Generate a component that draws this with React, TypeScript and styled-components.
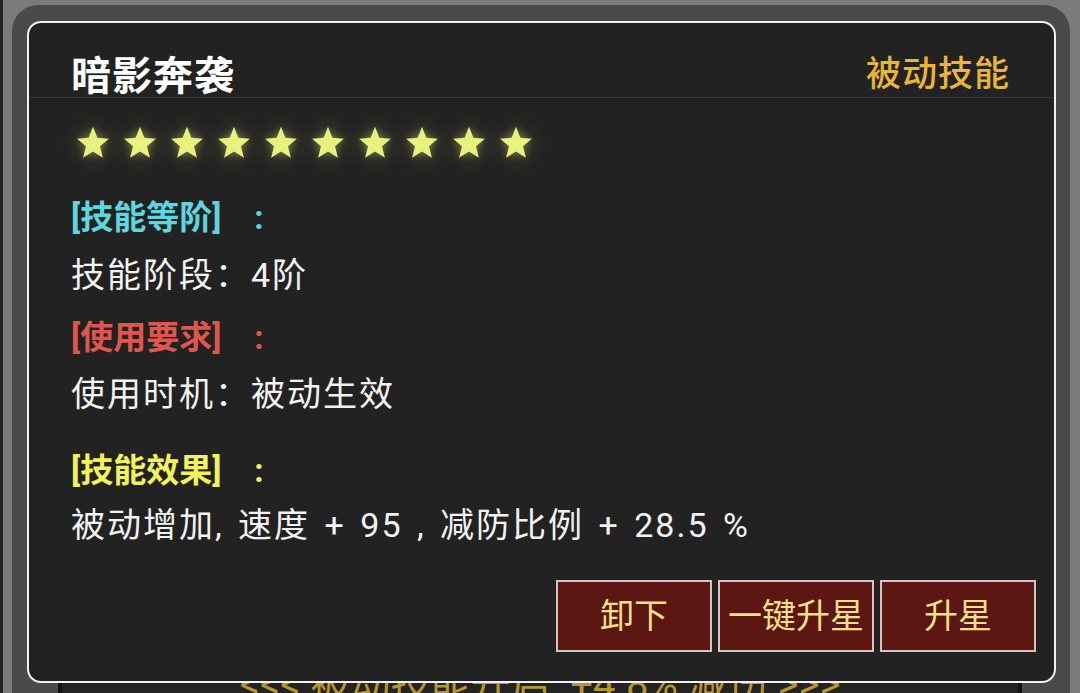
import React from 'react';
import styled, { createGlobalStyle } from 'styled-components';

const GlobalStyle = createGlobalStyle`
  html, body {
    margin: 0;
    padding: 0;
    background: #7b7b7b;
    overflow: hidden;
  }
  * {
    box-sizing: border-box;
  }
`;

const FONT = `"Roboto", "Noto Sans CJK SC", sans-serif`;

const Stage = styled.div`
  position: relative;
  height: 693px;
  width: 1080px;
  border-left: 3px solid #242424;
  padding: 5px 10px 0 9px;
  font-family: ${FONT};
`;

const Panel = styled.div`
  height: 100%;
  background: #4a4a4a;
  border-radius: 26px 26px 0 0;
  padding: 0 48px 0 46px;
  display: flex;
  flex-direction: column;
  justify-content: flex-end;
`;

const BuffBar = styled.div`
  height: 40px;
  background: #232323;
  border-left: 4px solid #111;
  border-right: 4px solid #111;
  display: flex;
  justify-content: center;
  padding-top: 10px;
  color: #b8952f;
  font-size: 40px;
  line-height: 44px;
  white-space: nowrap;
  overflow: hidden;
`;

const Modal = styled.div`
  position: absolute;
  left: 24px;
  top: 21px;
  width: 1029px;
  height: 662px;
  background: #222222;
  border: 2px solid #f2f2f2;
  border-radius: 14px;
  display: flex;
  flex-direction: column;
  overflow: hidden;
`;

const Header = styled.div`
  display: flex;
  justify-content: space-between;
  align-items: flex-end;
  height: 75px;
  padding: 0 44px 0 42px;
  border-bottom: 1px solid #383838;
`;

const Title = styled.div`
  color: #ffffff;
  font-size: 40px;
  font-weight: 700;
  line-height: 40px;
  letter-spacing: 1px;
`;

const Kind = styled.div`
  color: #e8b43a;
  font-size: 35px;
  font-weight: 500;
  line-height: 40px;
  letter-spacing: 1px;
  padding-bottom: 2px;
`;

const Body = styled.div`
  padding: 0 42px;
  display: flex;
  flex-direction: column;
`;

const Stars = styled.div`
  display: flex;
  gap: 11px;
  margin-top: 27px;
  margin-left: 4px;
`;

const Star = styled.svg`
  width: 36px;
  height: 36px;
  filter: drop-shadow(0 0 4px rgba(230, 240, 120, 0.45))
    drop-shadow(0 0 12px rgba(210, 220, 110, 0.25));
`;

const Section = styled.div<{ $top: number }>`
  margin-top: ${p => p.$top}px;
  display: flex;
  flex-direction: column;
`;

const Heading = styled.div<{ $color: string }>`
  color: ${p => p.$color};
  font-size: 33px;
  font-weight: 700;
  line-height: 40px;
  white-space: pre;
`;

const Line = styled.div<{ $gap: number }>`
  margin-top: ${p => p.$gap}px;
  color: #f2f2f2;
  font-size: 34px;
  line-height: 44px;
  letter-spacing: 2px;
  word-spacing: 4px;
  white-space: nowrap;
`;

const Actions = styled.div`
  margin-top: auto;
  display: flex;
  justify-content: flex-end;
  gap: 6px;
  padding: 0 18px 29px;
`;

const ActionButton = styled.button`
  width: 156px;
  height: 72px;
  background: #5c1713;
  border: 2px solid #d8c2c2;
  color: #f3df8c;
  font-family: ${FONT};
  font-size: 34px;
  line-height: 1;
  padding: 0;
  cursor: pointer;
`;

const STAR_POINTS =
  '12,1.2 14.9,8.5 22.6,9.1 16.7,14.1 18.6,21.8 12,17.6 5.4,21.8 7.3,14.1 1.4,9.1 9.1,8.5';

const sections = [
  { top: 37, color: '#5dd6df', title: '[技能等阶]\u3000:', text: '技能阶段：4阶', gap: 15 },
  { top: 21, color: '#e0564f', title: '[使用要求]\u3000:', text: '使用时机：被动生效', gap: 14 },
  {
    top: 35,
    color: '#f2f25a',
    title: '[技能效果]\u3000:',
    text: '被动增加, 速度 + 95 , 减防比例 + 28.5 %',
    gap: 12,
  },
];

const App: React.FC = () => {
  return (
    <>
      <GlobalStyle />
      <Stage>
        <Panel>
          <BuffBar>&lt;&lt;&lt; 被动技能开启: +4.8% 减伤 &gt;&gt;&gt;</BuffBar>
        </Panel>
        <Modal>
          <Header>
            <Title>暗影奔袭</Title>
            <Kind>被动技能</Kind>
          </Header>
          <Body>
            <Stars>
              {Array.from({ length: 10 }).map((_, i) => (
                <Star key={i} viewBox="0 0 24 24">
                  <polygon points={STAR_POINTS} fill="#e8f07e" />
                </Star>
              ))}
            </Stars>
            {sections.map(s => (
              <Section key={s.title} $top={s.top}>
                <Heading $color={s.color}>{s.title}</Heading>
                <Line $gap={s.gap}>{s.text}</Line>
              </Section>
            ))}
          </Body>
          <Actions>
            <ActionButton>卸下</ActionButton>
            <ActionButton>一键升星</ActionButton>
            <ActionButton>升星</ActionButton>
          </Actions>
        </Modal>
      </Stage>
    </>
  );
};

export default App;
